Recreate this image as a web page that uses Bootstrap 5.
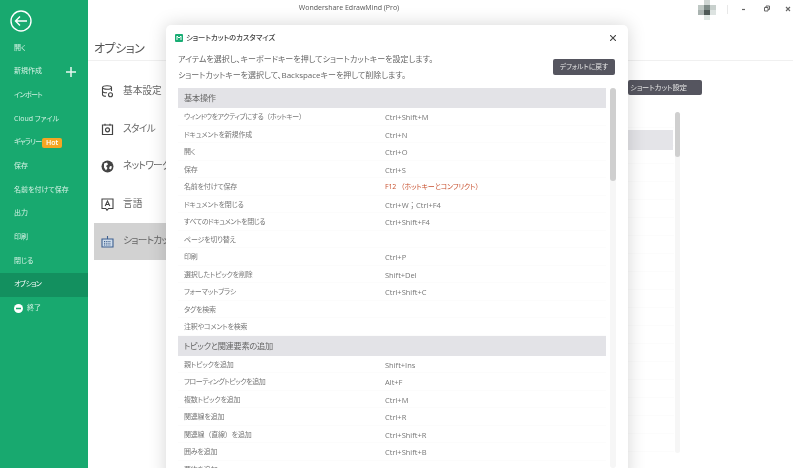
<!DOCTYPE html>
<html lang="ja"><head><meta charset="utf-8">
<link href="https://cdn.jsdelivr.net/npm/bootstrap@5.3.0/dist/css/bootstrap.min.css" rel="stylesheet">
<style>
html,body{height:468px;overflow:hidden;background:#fff}
body{font-family:"Open Sans","Noto Sans CJK JP",sans-serif;font-feature-settings:"palt";color:#666;width:800px;position:relative;filter:blur(.35px)}
.rail{width:88px;height:468px;background:#18a96f;flex:none;padding-top:10px}
.rail-back{margin-left:10px;display:block;height:22px}
.rail-list{margin-top:4px}
.rail-item{height:23.7px;padding-left:14px;font-size:7px;color:#d5f2e5;white-space:nowrap}
.rail-item.on{background:#13905f;color:#fff}
.rail-kana{letter-spacing:-.7px}
.rail-hot{background:#f5a623;color:#fff;font-size:7px;font-weight:600;border-radius:2px;padding:0 3.5px;margin-left:1px;line-height:10px}
.rail-plus{margin-right:12px}
.stage{flex:1;min-width:0;position:relative}
.app-title{height:16px;font-size:7px;color:#555;line-height:16px;text-align:center;padding-right:190px}
.opt-head{font-size:12px;letter-spacing:-.5px;color:#555;padding:25px 0 0 6px;height:45px;line-height:15px;border-bottom:1px solid #f0f0f0;margin-right:7px}
.opt-menu{padding:12px 0 0 6px;width:78px}
.opt-item{height:37.5px;padding-left:7px;gap:9px;font-size:9.7px;color:#666;white-space:nowrap;overflow:hidden}
.opt-item svg{flex:none}
.opt-item.on{background:#d2d2d2;height:36.5px}
.opt-tight{letter-spacing:-.7px}
.opt-side{position:absolute;left:540px;top:80px;width:172px;height:373px}
.opt-lines{position:absolute;left:0;top:30px;width:46px;height:343px;background:repeating-linear-gradient(to bottom,#fff 0,#fff 17px,#fcfcfc 17px,#fcfcfc 18px)}
.opt-btn{position:absolute;left:0;top:0;width:74px;height:15px;background:#55555f;color:#e6e6e6;border-radius:2px;font-size:7.2px;line-height:15px;text-align:right;padding-right:15px;white-space:nowrap}
.opt-sel{position:absolute;left:0;top:50px;width:45px;height:20px;background:#e4e4e8}
.opt-track{position:absolute;left:47px;top:32px;width:5px;height:341px;background:#f6f6f6;border-radius:3px}
.opt-thumb{position:absolute;left:47px;top:32px;width:5px;height:45px;background:#cfcfcf;border-radius:3px}
.win-sep{position:absolute;left:727px;top:5px;width:1px;height:9px;background:#e8e8e8}
.dlg{position:absolute;left:166px;top:25px;width:462px;height:460px;background:#fff;border-radius:5px;box-shadow:0 0 18px rgba(0,0,0,.17);overflow:hidden}
.dlg-head{height:25px;padding:0 0 0 9px;gap:3px;font-size:7.3px;color:#444;font-weight:500}
.dlg-x{position:absolute;right:12px;top:10px}
.dlg-intro{padding:1px 12px 0;font-size:8px;color:#666;line-height:16px;height:38px}
.dlg-reset{position:absolute;left:387px;top:34px;width:62px;height:16px;background:#55555f;color:#e6e6e6;border-radius:2px;font-size:6.8px;line-height:16px;text-align:center}
.dlg-body{padding-left:12px;position:relative}
.sec-row{width:428px;height:20px;background:#e3e3e7;font-size:8.2px;letter-spacing:-.25px;color:#666;padding-left:6px;line-height:20px}
.key-row{width:428px;height:17.5px;font-size:7.5px;color:#777;padding:1px 0 0 6px;line-height:16.5px;border-bottom:1px solid #fcfcfc}
.key-name{width:201px;flex:none;white-space:nowrap;font-size:7px;letter-spacing:-.2px}
.key-name.key-snug{letter-spacing:-.45px}
.key-val{white-space:nowrap;font-feature-settings:normal}
.key-bad{color:#c8512f;font-size:7px;letter-spacing:-.2px;font-feature-settings:"palt"}
.key-paren{font-feature-settings:normal}
.dlg-track{position:absolute;left:444px;top:0;width:6px;height:380px;background:#f6f6f6;border-radius:3px}
.dlg-thumb{position:absolute;left:444px;top:0;width:6px;height:93px;background:#cfcfcf;border-radius:3px}
.pix{position:absolute;left:698px;top:0;display:grid;grid-template-columns:6px 6px 6px;grid-auto-rows:5px}
.pix-a{background:#cfd6d3}.pix-b{background:#bfc8c4}.pix-c{background:#7f8c88}.pix-d{background:#c8d0cd}.pix-e{background:#a9b3b0}.pix-f{background:#4e5a57}.pix-g{background:#dde3e1}.pix-h{background:#dfe8e4}
</style></head>
<body>
<div class="d-flex">
  <nav class="rail">
    <svg class="rail-back" width="22" height="22" viewBox="0 0 22 22" fill="none" stroke="#fff" stroke-width="1.4"><circle cx="11" cy="11" r="10"/><path d="M5.500 11H17M10 6.500 5.500 11l4.500 4.500"/></svg>
    <div class="rail-list">
      <div class="rail-item d-flex align-items-center">開く</div>
      <div class="rail-item d-flex align-items-center justify-content-between">新規作成<svg class="rail-plus" width="10" height="10" viewBox="0 0 10 10" stroke="#e8f8f1" stroke-width="1.500"><path d="M5 0v10M0 5h10"/></svg></div>
      <div class="rail-item d-flex align-items-center"><span class="rail-kana">インポート</span></div>
      <div class="rail-item d-flex align-items-center">Cloud ファイル</div>
      <div class="rail-item d-flex align-items-center"><span class="rail-kana">ギャラリー</span><span class="rail-hot">Hot</span></div>
      <div class="rail-item d-flex align-items-center">保存</div>
      <div class="rail-item d-flex align-items-center">名前を付けて保存</div>
      <div class="rail-item d-flex align-items-center">出力</div>
      <div class="rail-item d-flex align-items-center">印刷</div>
      <div class="rail-item d-flex align-items-center">閉じる</div>
      <div class="rail-item on d-flex align-items-center"><span class="rail-kana">オプション</span></div>
      <div class="rail-item d-flex align-items-center gap-1"><svg width="9" height="9" viewBox="0 0 9 9"><circle cx="4.500" cy="4.500" r="4.500" fill="#fff"/><path d="M2 4.500h5" stroke="#18a96f" stroke-width="1.500"/></svg>終了</div>
    </div>
  </nav>
  <main class="stage">
    <div class="app-title">Wondershare EdrawMind (Pro)</div>
    <div class="opt-head">オプション</div>
    <div class="opt-menu">
      <div class="opt-item d-flex align-items-center"><svg width="13" height="13" viewBox="0 0 13 13" fill="none" stroke="#444" stroke-width="1.100"><ellipse cx="6" cy="2.500" rx="4.500" ry="1.800"/><path d="M1.500 2.500v7c0 1 1.500 1.800 3.500 1.800M10.500 2.500V6M1.500 6c0 1 2 1.800 4.500 1.800"/><circle cx="9.500" cy="9.800" r="2"/></svg>基本設定</div>
      <div class="opt-item d-flex align-items-center"><svg width="13" height="13" viewBox="0 0 13 13" fill="none" stroke="#444" stroke-width="1.200"><path d="M1.500 2h10v9.500h-10zM4 .8v2M9 .8v2"/><circle cx="6.500" cy="6.800" r="2"/></svg><span class="opt-tight">スタイル</span></div>
      <div class="opt-item d-flex align-items-center"><svg width="13" height="13" viewBox="0 0 13 13"><circle cx="6.500" cy="6.500" r="6" fill="#444"/><path d="M3 3.500 6 2.500 7 4.500 5 6 6.500 8 5 10.500 3 7.500zM9 6l2 .5-1 3-2-1z" fill="#fff"/></svg><span class="opt-tight">ネットワーク</span></div>
      <div class="opt-item d-flex align-items-center"><svg width="13" height="13" viewBox="0 0 13 13" fill="none" stroke="#444" stroke-width="1.100"><path d="M1 1h11v9.500H7.500L6 12.300 4.800 10.500H1z"/><path d="M4.200 8 6.500 3l2.300 5M5 6.500h3"/></svg>言語</div>
      <div class="opt-item on d-flex align-items-center"><svg width="13" height="13" viewBox="0 0 13 13" fill="#cfdcea" stroke="#3d5f8f" stroke-width="1.100"><path d="M1 4h11v8H1zM6.500 4V1"/><path d="M3 6.500h7M3 8.200h7M3 10h7" stroke-dasharray="1 .8"/></svg><span class="opt-tight">ショートカット設定</span></div>
    </div>
    <div class="opt-side">
      <div class="opt-lines"></div>
      <div class="opt-btn">ショートカット設定</div>
      <div class="opt-sel"></div>
      <div class="opt-track"></div>
      <div class="opt-thumb"></div>
    </div>
  </main>
</div>
<div class="pix">
  <i></i><i class="pix-a"></i><i></i>
  <i class="pix-b"></i><i class="pix-c"></i><i class="pix-d"></i>
  <i class="pix-e"></i><i class="pix-f"></i><i class="pix-g"></i>
  <i></i><i class="pix-h"></i><i></i>
</div>
<div class="win-sep"></div>
<svg class="position-absolute top-0 end-0" width="62" height="18" viewBox="0 0 62 18" fill="none" stroke="#666"><path d="M4 9.500h3" stroke-width="1.200"/><path d="M26.500 7.500h3.500v3.500h-3.500zM28 7.500V6h3.500v3.500H30"/><path d="M48 7l4 4M52 7l-4 4" stroke-width="1.100"/></svg>
<section class="dlg">
  <div class="dlg-head d-flex align-items-center"><svg width="8" height="8" viewBox="0 0 8 8"><rect width="8" height="8" rx="1" fill="#19ad74"/><path d="M2 6V2l2 2 2-2v4" fill="none" stroke="#fff" stroke-width="1"/></svg>ショートカットのカスタマイズ</div>
  <svg class="dlg-x" width="6" height="6" viewBox="0 0 6 6" stroke="#444" stroke-width="1.100"><path d="M0 0l6 6M6 0 0 6"/></svg>
  <div class="dlg-intro">アイテムを選択し、キーボードキーを押してショートカットキーを設定します。<br>ショートカットキーを選択して、Backspaceキーを押して削除します。</div>
  <div class="dlg-reset">デフォルトに戻す</div>
  <div class="dlg-body">
    <div class="dlg-track"></div><div class="dlg-thumb"></div>
    <div class="sec-row">基本操作</div>
    <div class="key-row d-flex"><span class="key-name key-snug">ウィンドウをアクティブにする<span class="key-paren">（</span>ホットキー<span class="key-paren">）</span></span><span class="key-val">Ctrl+Shift+M</span></div>
    <div class="key-row d-flex"><span class="key-name">ドキュメントを新規作成</span><span class="key-val">Ctrl+N</span></div>
    <div class="key-row d-flex"><span class="key-name">開く</span><span class="key-val">Ctrl+O</span></div>
    <div class="key-row d-flex"><span class="key-name">保存</span><span class="key-val">Ctrl+S</span></div>
    <div class="key-row d-flex"><span class="key-name">名前を付けて保存</span><span class="key-val key-bad">F12 <span class="key-paren">（</span>ホットキーとコンフリクト<span class="key-paren">）</span></span></div>
    <div class="key-row d-flex"><span class="key-name">ドキュメントを閉じる</span><span class="key-val">Ctrl+W；Ctrl+F4</span></div>
    <div class="key-row d-flex"><span class="key-name key-snug">すべてのドキュメントを閉じる</span><span class="key-val">Ctrl+Shift+F4</span></div>
    <div class="key-row d-flex"><span class="key-name">ページを切り替え</span><span class="key-val"></span></div>
    <div class="key-row d-flex"><span class="key-name">印刷</span><span class="key-val">Ctrl+P</span></div>
    <div class="key-row d-flex"><span class="key-name">選択したトピックを削除</span><span class="key-val">Shift+Del</span></div>
    <div class="key-row d-flex"><span class="key-name">フォーマットブラシ</span><span class="key-val">Ctrl+Shift+C</span></div>
    <div class="key-row d-flex"><span class="key-name">タグを検索</span><span class="key-val"></span></div>
    <div class="key-row d-flex"><span class="key-name">注釈やコメントを検索</span><span class="key-val"></span></div>
    <div class="sec-row">トピックと関連要素の追加</div>
    <div class="key-row d-flex"><span class="key-name">親トピックを追加</span><span class="key-val">Shift+Ins</span></div>
    <div class="key-row d-flex"><span class="key-name key-snug">フローティングトピックを追加</span><span class="key-val">Alt+F</span></div>
    <div class="key-row d-flex"><span class="key-name">複数トピックを追加</span><span class="key-val">Ctrl+M</span></div>
    <div class="key-row d-flex"><span class="key-name">関連線を追加</span><span class="key-val">Ctrl+R</span></div>
    <div class="key-row d-flex"><span class="key-name">関連線<span class="key-paren">（</span>直線<span class="key-paren">）</span>を追加</span><span class="key-val">Ctrl+Shift+R</span></div>
    <div class="key-row d-flex"><span class="key-name">囲みを追加</span><span class="key-val">Ctrl+Shift+B</span></div>
    <div class="key-row d-flex"><span class="key-name">要約を追加</span><span class="key-val">Ctrl+L</span></div>
  </div>
</section>
<script src="https://cdn.jsdelivr.net/npm/bootstrap@5.3.0/dist/js/bootstrap.bundle.min.js"></script>
</body></html>
